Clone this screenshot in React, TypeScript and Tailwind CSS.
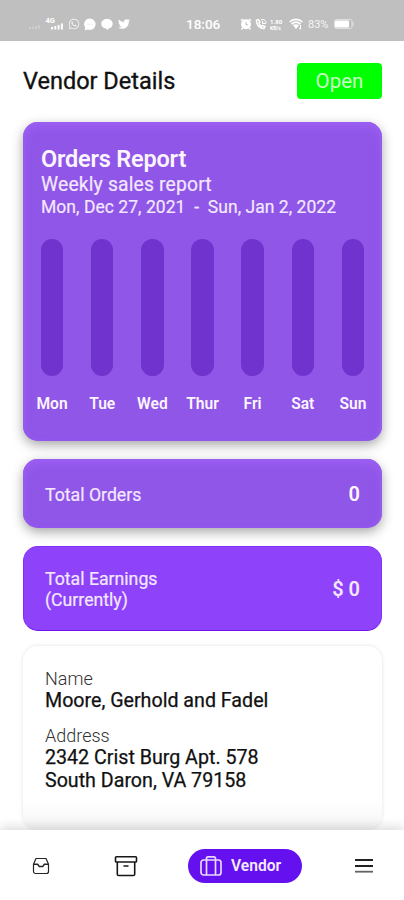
import type { ReactNode } from "react";
import { FaTwitter, FaWhatsapp } from "react-icons/fa";

const days = ["Mon", "Tue", "Wed", "Thur", "Fri", "Sat", "Sun"];

function StatusBar() {
  return (
    <header className="flex h-[41px] shrink-0 items-end bg-[#bfbfbf] pb-[9px] text-white">
      <div className="ml-[28px] flex h-4 w-[104px] items-center">
        <svg viewBox="0 0 38 16" className="h-4 w-[38px]" fill="currentColor">
          <g opacity=".22">
            <rect x="1" y="11" width="2" height="2" />
            <rect x="4" y="10.500" width="2" height="2.500" />
            <rect x="7" y="10" width="2" height="3" />
            <rect x="10" y="9" width="2" height="4" />
          </g>
          <text x="17.500" y="7" fontSize="7.500" fontWeight="700" fontFamily="Roboto, sans-serif">4G</text>
          <rect x="23" y="11" width="2" height="2.500" />
          <rect x="26.300" y="10" width="2" height="3.500" />
          <rect x="29.600" y="9" width="2" height="4.500" />
          <rect x="32.900" y="7.500" width="2" height="6" />
        </svg>
        <FaWhatsapp className="ml-0.5 size-[12px] opacity-80" />
        <svg viewBox="0 0 12 13" className="ml-[4px] h-[13px] w-[12px]">
          <path d="M6 .5a5.700 5.700 0 1 1-2.200 11L.7 12.300l.6-2.700A5.700 5.700 0 0 1 6 .5Z" fill="currentColor" />
          <path d="M3.500 6.200h5" stroke="#ddd" strokeWidth="1" strokeDasharray="1 1" />
        </svg>
        <svg viewBox="0 0 12 13" className="ml-[5px] h-[13px] w-[12px]">
          <path d="M6 1c3.200 0 5.700 2 5.700 4.700S9.800 10 8 10.300L6.300 12 5 10.400C2 10.200.3 8.200.3 5.700.3 3 2.800 1 6 1Z" fill="currentColor" />
        </svg>
        <FaTwitter className="ml-[5px] size-[12px] shrink-0" />
      </div>
      <span className="ml-[54px] w-[36px] text-[13.500px] leading-4 font-medium">18:06</span>
      <div className="ml-[18px] flex h-4 items-center">
        <svg viewBox="0 0 12 12" className="h-3 w-3" fill="none">
          <circle cx="6" cy="6.300" r="5" fill="currentColor" />
          <path d="M1 2.800 3 1M11 2.800 9 1M2.800 10 1.500 11.500M9.200 10l1.300 1.500" stroke="currentColor" strokeWidth="1.500" />
          <path d="M6 4v2.800h2" stroke="#bfbfbf" />
        </svg>
        <svg viewBox="0 0 12 12" className="ml-[3px] h-3 w-3" fill="none" stroke="currentColor">
          <path d="M1.500 2C1 6 4 10.500 9 10.500l1-2-2.500-1-1 .7C5 7.500 4.200 6.200 3.800 4.900L4.900 4 3.500 1.500Z" strokeWidth="1.500" />
          <path d="M6 2c3-1.500 6 1 4.500 4M7.500 3v2.500H10" />
        </svg>
        <div className="ml-[3px] flex w-[14px] flex-col justify-center font-bold whitespace-nowrap">
          <span className="text-[6px] leading-[7px]">1.80</span>
          <span className="text-[5px] leading-[6px]">KB/s</span>
        </div>
        <svg viewBox="0 0 14 12" className="ml-[5px] h-3 w-[14px]" fill="none" stroke="currentColor">
          <path d="M.7 4C4 .5 10 .5 13.300 4M2.500 6c3-2.500 6-2.500 9 0" strokeWidth="1.800" />
          <path d="m3.800 7 3.200 4 3.200-4Q7 5.300 3.800 7Z" fill="currentColor" stroke="none" />
          <path d="M11.500 7v4m-1.200-1 1.200 1.500" />
        </svg>
        <span className="mt-px ml-[5px] w-[22px] text-[11px] leading-4 opacity-85">83%</span>
        <svg viewBox="0 0 20 10" className="ml-[4px] h-[10px] w-[20px]">
          <rect x=".5" y=".5" width="17.500" height="9" rx="2" fill="none" stroke="currentColor" opacity=".5" />
          <rect x="1" y="1.500" width="14" height="7" rx="1" fill="currentColor" />
          <rect x="18.500" y="3" width="1" height="4" fill="currentColor" opacity=".5" />
        </svg>
      </div>
    </header>
  );
}

function OrdersReport() {
  return (
    <section className="mt-[23px] h-[319px] shrink-0 rounded-[15px] bg-[#8f56e8] px-1 pt-[23px] shadow-[0_4px_12px_rgba(0,0,0,0.35),inset_0_5px_9px_#9c60f2,inset_0_0_4px_#9557f3]">
      <div className="pl-[14px] whitespace-nowrap">
        <h2 className="text-[23.500px] leading-[28px] font-semibold tracking-[-0.200px] text-[#fdf5ff]">Orders Report</h2>
        <p className="text-[19.300px] leading-[23px] tracking-[0.180px] text-[#f3e8ff] [-webkit-text-stroke:0.200px]">Weekly sales report</p>
        <p className="text-[17.500px] leading-[23px] tracking-[0.040px] whitespace-pre text-[#f3e8ff] [-webkit-text-stroke:0.200px]">Mon, Dec 27, 2021  -  Sun, Jan 2, 2022</p>
      </div>
      <div className="mt-5 grid grid-cols-7">
        {days.map((day) => (
          <div key={day} className="flex flex-col items-center">
            <div className="h-[137px] w-[22.500px] rounded-full bg-[#7033ce]" />
            <span className="mt-[18px] text-[15.600px] leading-5 font-semibold text-[#fdf5ff]">{day}</span>
          </div>
        ))}
      </div>
    </section>
  );
}

function InboxIcon() {
  return (
    <svg viewBox="0 0 18 18" className="size-[18px]" fill="none" stroke="#252525" strokeWidth="1.200" strokeLinejoin="round">
      <path d="M4 1.500h10l2.500 5.800v7.200a2 2 0 0 1-2 2h-11a2 2 0 0 1-2-2V7.300Z" />
      <path d="M1.500 7.300h4.200l1.600 2.300h3.400l1.600-2.300h4.200" strokeWidth="1.500" />
    </svg>
  );
}

function ArchiveIcon() {
  return (
    <svg viewBox="0 0 24 22" className="h-[22px] w-6" fill="none" stroke="#171717" strokeWidth="1.600" strokeLinejoin="round">
      <rect x="1.500" y="1.800" width="21" height="5.200" rx=".8" />
      <path d="M3.300 7v12.200q0 1.300 1.300 1.300h14.800q1.300 0 1.300-1.300V7M9.500 11h5" />
    </svg>
  );
}

function BriefcaseIcon() {
  return (
    <svg viewBox="0 0 22 22" className="size-[22px]" fill="none" stroke="#ead8ff" strokeWidth="1.700" strokeLinejoin="round">
      <rect x="1" y="5" width="20" height="15" rx="2.500" />
      <path d="M6.500 20V3.500q0-1.700 1.700-1.700h5.600q1.700 0 1.700 1.700V20" />
    </svg>
  );
}

function NavItem({ label, className, children }: { label: string; className: string; children: ReactNode }) {
  return <button aria-label={label} className={className}>{children}</button>;
}

export default function App() {
  return (
    <div className="flex h-[900px] w-[404px] flex-col overflow-hidden bg-white font-[Roboto,sans-serif]">
      <StatusBar />
      <main className="flex h-[789px] shrink-0 flex-col pr-[22px] pl-[23px]">
        <div className="mt-[22px] flex h-9 items-center justify-between">
          <h1 className="text-[23.500px] leading-9 text-[#111] [-webkit-text-stroke:0.350px]">Vendor Details</h1>
          <button className="h-9 w-[85px] rounded-[4px] bg-[#00ff00] text-[20.500px] leading-9 text-[#caffc9]">Open</button>
        </div>
        <OrdersReport />
        <section className="mt-[18px] flex h-[69px] shrink-0 items-center justify-between rounded-[15px] bg-[#8f56e8] pr-[22px] pl-[22px] text-[#f3e8ff] shadow-[0_4px_12px_rgba(0,0,0,0.35),inset_0_5px_9px_#9c60f2,inset_0_0_4px_#9557f3]">
          <span className="pt-[2px] text-[17.700px] leading-5 [-webkit-text-stroke:0.200px]">Total Orders</span>
          <span className="text-[20px] leading-6 font-semibold text-[#fdf5ff]">0</span>
        </section>
        <section className="mt-[18px] flex h-[85px] shrink-0 items-center justify-between rounded-[15px] border border-[#842ff8] border-b-[#6f12e8] bg-[#8e43fb] px-[21px] text-[#f3e8ff]">
          <p className="pt-[2px] text-[17.700px] leading-[21px] [-webkit-text-stroke:0.200px]">Total Earnings<br />(Currently)</p>
          <span className="pt-px text-[20px] leading-6 font-semibold">$ 0</span>
        </section>
        <section className="mt-[15px] flex h-[183px] shrink-0 flex-col rounded-[15px] bg-linear-to-b from-white from-85% to-[#f5f5f5] px-[22px] pt-[23px] whitespace-nowrap shadow-[0_0_4px_rgba(0,0,0,0.12)]">
          <p className="text-[18px] leading-5 font-light text-[#333]">Name</p>
          <p className="text-[19.650px] leading-[23px] text-[#111] [-webkit-text-stroke:0.250px]">Moore, Gerhold and Fadel</p>
          <p className="mt-[14px] text-[18px] leading-5 font-light text-[#333]">Address</p>
          <p className="text-[19.650px] leading-[23px] text-[#111] [-webkit-text-stroke:0.250px]">2342 Crist Burg Apt. 578<br />South Daron, VA 79158</p>
        </section>
      </main>
      <nav className="z-10 flex h-[70px] shrink-0 items-start bg-white pt-[18px] shadow-[0_-3px_10px_rgba(0,0,0,0.14)]">
        <NavItem label="Inbox" className="ml-[32px] flex h-9 w-[18px] items-center"><InboxIcon /></NavItem>
        <NavItem label="Archive" className="ml-[64px] flex h-9 w-6 items-center"><ArchiveIcon /></NavItem>
        <NavItem label="Vendor" className="ml-[50px] mt-px flex h-[34px] w-[114px] items-center rounded-full bg-[#6410ef] pl-[12px] text-[15.600px] font-semibold text-[#f5eaff]">
          <BriefcaseIcon /><span className="ml-[9px] pt-px">Vendor</span>
        </NavItem>
        <NavItem label="Menu" className="ml-[53px] flex h-9 w-[18px] items-center">
          <svg viewBox="0 0 18 16" className="h-4 w-[18px]" stroke="#222" strokeWidth="1.800">
            <path d="M0 2h18M0 8h18" /><path d="M0 13.700h18" opacity=".7" />
          </svg>
        </NavItem>
      </nav>
    </div>
  );
}
